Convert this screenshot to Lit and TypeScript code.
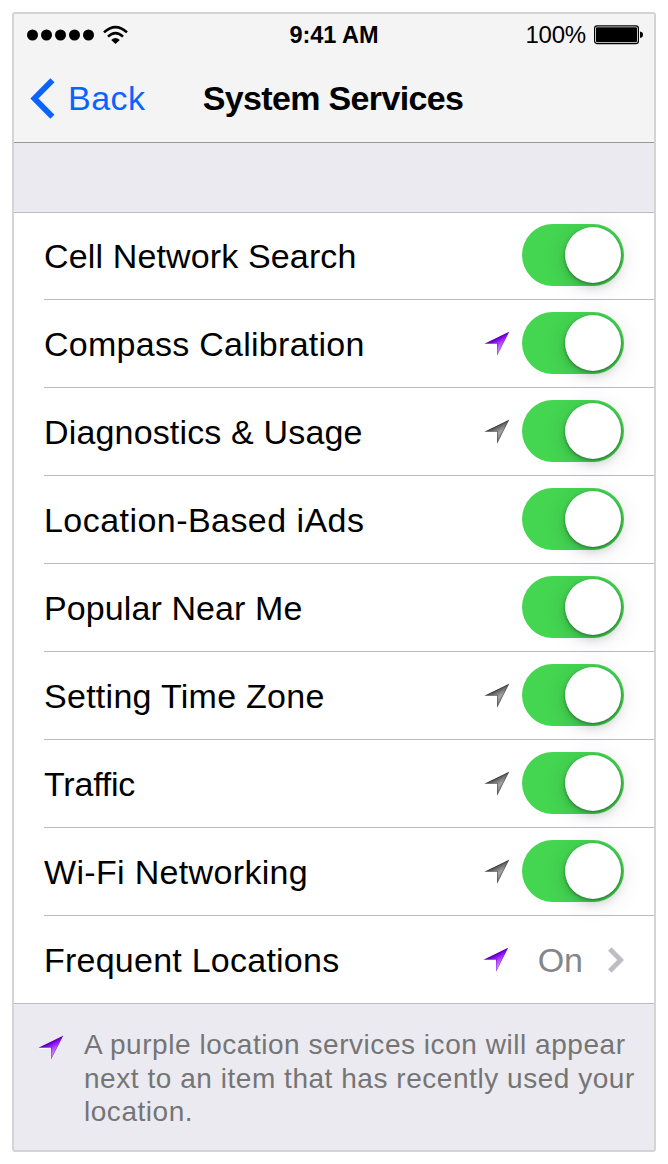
import { LitElement, html, css, svg, nothing } from "lit";
import { customElement, property } from "lit/decorators.js";

type Tone = "purple" | "gray";
interface Service {
  name: string;
  tone?: Tone;
  value?: string;
  spacing: number;
}

const SERVICES: Service[] = [
  { name: "Cell Network Search", spacing: 0.14 },
  { name: "Compass Calibration", tone: "purple", spacing: 0.27 },
  { name: "Diagnostics & Usage", tone: "gray", spacing: 0.16 },
  { name: "Location-Based iAds", spacing: 0.45 },
  { name: "Popular Near Me", spacing: 0.1 },
  { name: "Setting Time Zone", tone: "gray", spacing: 0.28 },
  { name: "Traffic", tone: "gray", spacing: -0.2 },
  { name: "Wi-Fi Networking", tone: "gray", spacing: 0.33 },
  { name: "Frequent Locations", tone: "purple", value: "On", spacing: 0.24 },
];

@customElement("location-arrow")
class LocationArrow extends LitElement {
  @property() tone: Tone = "purple";
  static styles = css`
    :host { display: block; width: 26px; height: 26px; flex: none; }
    svg { display: block; overflow: visible; }
    .edge { fill: none; stroke-width: 1.6; stroke-opacity: 0.45; }
  `;
  render() {
    const purple = this.tone === "purple";
    const stops = purple
      ? ["#3c0096", "#8a08f2", "#b250fa", "#dc90ff"]
      : ["#3c3c3c", "#707070", "#a4a4a4", "#808080"];
    return html`<svg width="26" height="26" viewBox="0 0 26 26">
      <defs>
        <linearGradient id="g" gradientUnits="userSpaceOnUse" x1="11" y1="6" x2="18" y2="19">
          ${stops.map((c, i) => svg`<stop offset=${[0.05, 0.28, 0.58, 1][i]} stop-color=${c}></stop>`)}
        </linearGradient>
        <clipPath id="c"><path d="M25.4 0.4L0.3 12.8H13V25Z"></path></clipPath>
      </defs>
      <g clip-path="url(#c)">
        <path d="M25.4 0.4L0.3 12.8H13V25Z" fill="url(#g)"></path>
        <path class="edge" d="M25.4 0.4L0.3 12.8H13V25Z" stroke=${purple ? "#6a00c8" : "#222"}></path>
      </g>
    </svg>`;
  }
}

@customElement("toggle-switch")
class ToggleSwitch extends LitElement {
  static styles = css`
    :host { display: block; flex: none; }
    .track {
      box-sizing: border-box; width: 102px; height: 62px; border-radius: 31px;
      background: #44d551; padding: 3px; display: flex; justify-content: flex-end;
    }
    .knob {
      width: 56px; height: 56px; border-radius: 50%; background: #fff;
      box-shadow: 0 1px 3px rgba(0, 0, 0, 0.38), 0 5px 9px rgba(0, 0, 0, 0.12), 0 4px 24px rgba(0, 0, 0, 0.12);
    }
  `;
  render() {
    return html`<div class="track"><div class="knob"></div></div>`;
  }
}

@customElement("app-root")
class AppRoot extends LitElement {
  static styles = css`
    :host {
      display: block; box-sizing: border-box; width: 668px; height: 1164px; padding: 12px;
      background: #fff; color: #000; font-family: "Liberation Sans", Arial, sans-serif;
    }
    svg { display: block; flex: none; }
    .frame {
      box-sizing: border-box; width: 644px; height: 1140px; border: 2px solid #d4d4d4;
      border-radius: 3px; background: #ebeaf0; overflow: hidden;
    }
    .header {
      box-sizing: border-box; height: 129px; background: #f4f4f4; border-bottom: 1px solid #98979c;
    }
    .status, .nav { display: grid; grid-template-columns: 1fr auto 1fr; align-items: center; }
    .status { height: 42px; padding: 0 11px 0 13px; font-size: 24px; line-height: 42px; }
    .signal { display: flex; align-items: center; gap: 8px; }
    .time { font-weight: bold; font-size: 23.5px; letter-spacing: -0.05px; padding-right: 2px; }
    .battery { display: flex; align-items: center; justify-content: flex-end; gap: 8px; }
    .battery span { letter-spacing: -0.2px; }
    .nav { height: 86px; padding: 0 17px 2px 16px; box-sizing: border-box; font-size: 34px; }
    .back { display: flex; align-items: center; gap: 13px; color: #0b63ff; letter-spacing: 0.5px; }
    .title { font-weight: bold; font-size: 34px; letter-spacing: -0.65px; padding-right: 1px; }
    .list { margin-top: 69px; background: #fff; box-shadow: inset 0 1px #bcbbc1; }
    .row {
      box-sizing: border-box; height: 88px; margin-left: 30px; padding-right: 30px;
      border-bottom: 1px solid #bcbbc1; display: flex; align-items: center;
    }
    .row:last-child { margin-left: 0; padding-left: 30px; }
    .name { flex: 1; font-size: 34px; line-height: 40px; padding-top: 1px; white-space: nowrap; }
    .row location-arrow { margin-right: 12px; }
    toggle-switch { padding-bottom: 2px; }
    .value { font-size: 34px; line-height: 40px; padding-top: 1px; color: #85858a; margin: 0 25px 0 16px; }
    .row:last-child location-arrow { margin-right: 13px; }
    .footer { display: flex; padding: 24px 0 0 24px; color: #757575; font-size: 28px; line-height: 33.6px; }
    .footer location-arrow { margin: 7px 20px 0 0; filter: drop-shadow(0 1px 0 #fff); }
    .line { display: block; white-space: nowrap; letter-spacing: 0.54px; }
  `;
  render() {
    return html`<div class="frame">
      <div class="header">
        <div class="status">
          <div class="signal">
            <svg width="68" height="12" viewBox="0 0 68 12">
              ${[0, 1, 2, 3, 4].map((i) => svg`<circle cx=${5.5 + i * 14} cy="6" r="5.5"></circle>`)}
            </svg>
            <svg width="25" height="20" viewBox="0 0 25 20" fill="none" stroke="#000" stroke-width="2.6">
              <path d="M1 7.4Q12.5 -3.2 24 7.4"></path>
              <path d="M5 11.6Q12.5 4.8 20 11.6"></path>
              <path d="M12.5 19L8.2 14.9Q12.5 11.2 16.8 14.9Z" fill="#000" stroke="none"></path>
            </svg>
          </div>
          <div class="time">9:41 AM</div>
          <div class="battery">
            <span>100%</span>
            <svg width="49" height="20" viewBox="0 0 49 20">
              <rect x="0.6" y="0.9" width="43.8" height="17.7" rx="2.6" fill="none" stroke="#000" stroke-width="1.2"></rect>
              <rect x="2" y="2.3" width="41" height="15" rx="1.2"></rect>
              <path d="M46 6.5Q49 7 49 9.8T46 13Z"></path>
            </svg>
          </div>
        </div>
        <div class="nav">
          <div class="back">
            <svg width="25" height="41" viewBox="0 0 25 41" fill="none" stroke="#0b63ff" stroke-width="5.8">
              <path d="M22.4 2.3L4.4 20.5L22.4 38.7"></path>
            </svg>
            <span>Back</span>
          </div>
          <div class="title">System Services</div>
        </div>
      </div>
      <div class="list">
        ${SERVICES.map(
          (s) => html`<div class="row">
            <span class="name" style="letter-spacing:${s.spacing}px">${s.name}</span>
            ${s.tone ? html`<location-arrow .tone=${s.tone}></location-arrow>` : nothing}
            ${s.value
              ? html`<span class="value">${s.value}</span>
                  <svg width="16" height="26" viewBox="0 0 16 26" fill="none" stroke="#bdbdc3" stroke-width="4.8">
                    <path d="M1.8 2L12.6 13L1.8 24"></path>
                  </svg>`
              : html`<toggle-switch></toggle-switch>`}
          </div>`
        )}
      </div>
      <div class="footer">
        <location-arrow></location-arrow>
        <div>
          <span class="line">A purple location services icon will appear</span>
          <span class="line">next to an item that has recently used your</span>
          <span class="line">location.</span>
        </div>
      </div>
    </div>`;
  }
}
